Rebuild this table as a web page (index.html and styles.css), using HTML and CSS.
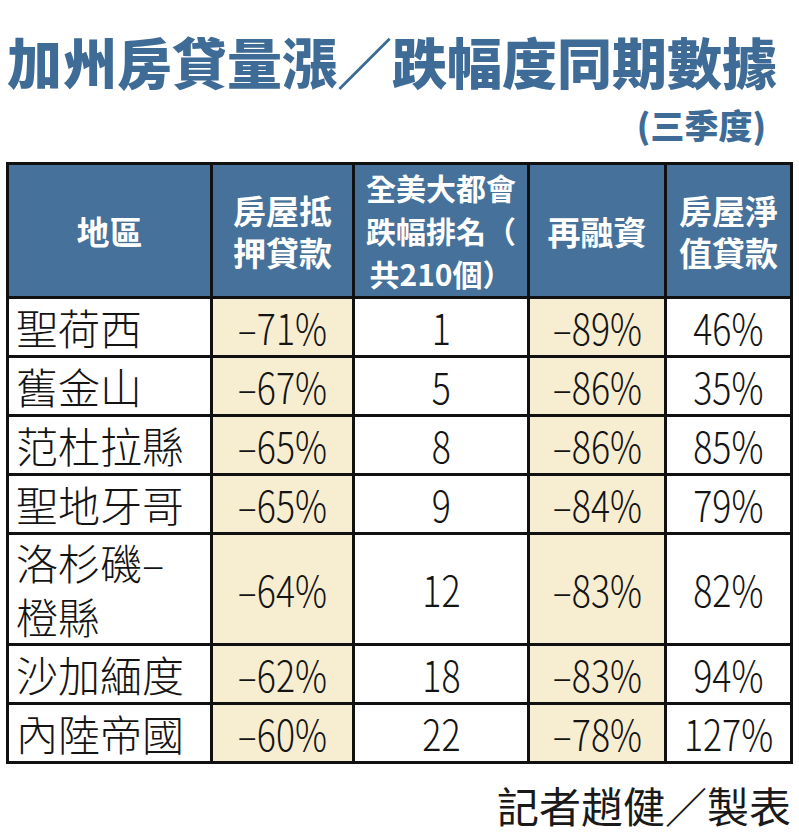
FILE: index.html
```html
<!DOCTYPE html>
<html lang="zh-Hant">
<head>
<meta charset="utf-8">
<title>加州房貸量漲／跌幅度同期數據</title>
<link rel="stylesheet" href="styles.css">
</head>
<body>
<div class="page">
  <h1 class="title">加州房貸量漲／跌幅度同期數據</h1>
  <div class="subtitle">(三季度)</div>
  <table class="data">
    <colgroup>
      <col class="c1"><col class="c2"><col class="c3"><col class="c4"><col class="c5">
    </colgroup>
    <thead>
      <tr>
        <th>地區</th>
        <th>房屋抵<br>押貸款</th>
        <th class="small">全美大都會<br>跌幅排名（<br>共210個）</th>
        <th>再融資</th>
        <th>房屋淨<br>值貸款</th>
      </tr>
    </thead>
    <tbody>
      <tr><td class="name">聖荷西</td><td class="hl"><span class="n">–71%</span></td><td><span class="n">1</span></td><td class="hl"><span class="n">–89%</span></td><td><span class="n">46%</span></td></tr>
      <tr><td class="name">舊金山</td><td class="hl"><span class="n">–67%</span></td><td><span class="n">5</span></td><td class="hl"><span class="n">–86%</span></td><td><span class="n">35%</span></td></tr>
      <tr><td class="name">范杜拉縣</td><td class="hl"><span class="n">–65%</span></td><td><span class="n">8</span></td><td class="hl"><span class="n">–86%</span></td><td><span class="n">85%</span></td></tr>
      <tr><td class="name">聖地牙哥</td><td class="hl"><span class="n">–65%</span></td><td><span class="n">9</span></td><td class="hl"><span class="n">–84%</span></td><td><span class="n">79%</span></td></tr>
      <tr class="tall"><td class="name">洛杉磯–<br>橙縣</td><td class="hl"><span class="n">–64%</span></td><td><span class="n">12</span></td><td class="hl"><span class="n">–83%</span></td><td><span class="n">82%</span></td></tr>
      <tr><td class="name">沙加緬度</td><td class="hl"><span class="n">–62%</span></td><td><span class="n">18</span></td><td class="hl"><span class="n">–83%</span></td><td><span class="n">94%</span></td></tr>
      <tr><td class="name">內陸帝國</td><td class="hl"><span class="n">–60%</span></td><td><span class="n">22</span></td><td class="hl"><span class="n">–78%</span></td><td><span class="n">127%</span></td></tr>
    </tbody>
  </table>
  <div class="credit">記者趙健／製表</div>
</div>
</body>
</html>
```

FILE: styles.css
```css
html, body {
  margin: 0;
  padding: 0;
  background: #ffffff;
}

body {
  font-family: "Noto Sans CJK TC", "Noto Sans", sans-serif;
  color: #161616;
}

.page {
  width: 799px;
  height: 834px;
  box-sizing: border-box;
  padding: 27px 0 0 0;
}

.title {
  margin: 0;
  padding-left: 7px;
  font-size: 55px;
  line-height: 66px;
  font-weight: 900;
  color: #3f6c96;
  white-space: nowrap;
}

.subtitle {
  margin: 12px 0 0 0;
  padding-right: 33px;
  text-align: right;
  font-size: 34px;
  line-height: 40px;
  font-weight: 900;
  color: #3f6c96;
}

.data {
  margin: 17px 0 0 6px;
  width: 784px;
  border-collapse: collapse;
  table-layout: fixed;
  border: 3px solid #111;
}

.c1 { width: 204px; }
.c2 { width: 142px; }
.c3 { width: 175px; }
.c4 { width: 137px; }
.c5 { width: 126px; }

.data th,
.data td {
  border: 3px solid #111;
  padding: 0;
  text-align: center;
  vertical-align: middle;
}

.data th {
  height: 131px;
  background: #45719a;
  color: #ffffff;
  font-size: 33px;
  line-height: 42px;
  font-weight: 700;
}

.data th.small {
  font-size: 30px;
  line-height: 43px;
}

.data td {
  height: 56px;
  font-size: 42px;
  line-height: 54px;
  font-weight: 300;
  color: #141414;
  background: #ffffff;
}

.data tr.tall td {
  height: 108px;
}

.data td.name {
  text-align: left;
  padding-left: 7px;
}

.data td.hl {
  background: #f7edd1;
}

.n {
  display: inline-block;
  transform: scaleX(0.85);
}

.credit {
  margin-top: 17px;
  padding-right: 8px;
  text-align: right;
  font-size: 42px;
  line-height: 48px;
  font-weight: 400;
  color: #1a1a1a;
}
```
